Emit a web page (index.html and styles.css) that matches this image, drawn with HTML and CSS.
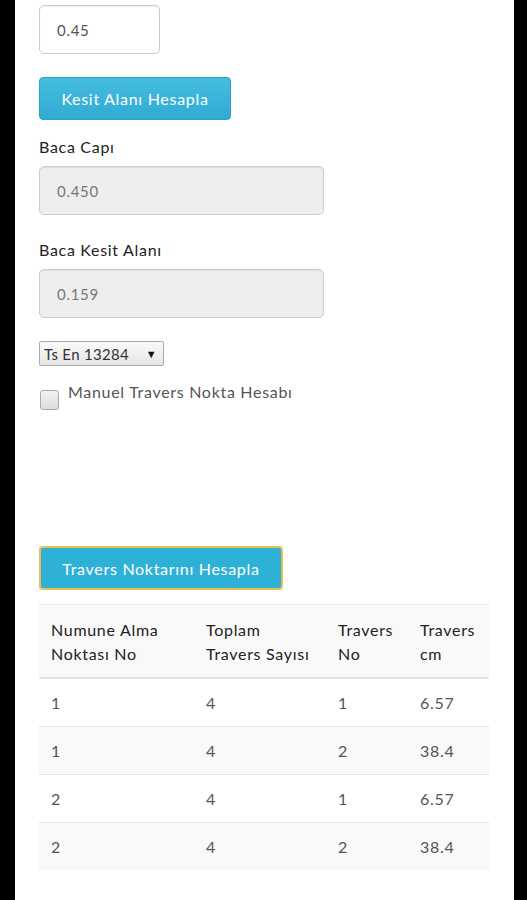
FILE: index.html
```html
<!DOCTYPE html>
<html lang="tr">
<head>
<meta charset="utf-8">
<link rel="stylesheet" href="styles.css">
</head>
<body>
<div class="page">
  <div class="content">
    <input class="field field-small" type="text" value="0.45">
    <button class="btn btn-calc">Kesit Alanı Hesapla</button>

    <label class="lbl lbl-first">Baca Capı</label>
    <input class="field field-wide" type="text" value="0.450" disabled>

    <label class="lbl lbl-next">Baca Kesit Alanı</label>
    <input class="field field-wide" type="text" value="0.159" disabled>

    <div class="select"><span>Ts En 13284</span><span class="arrow">▼</span></div>

    <div class="check-row">
      <span class="box"></span>
      <span class="check-label">Manuel Travers Nokta Hesabı</span>
    </div>

    <button class="btn btn-travers">Travers Noktarını Hesapla</button>

    <table class="tbl">
      <thead>
        <tr><th class="c1">Numune Alma Noktası No</th><th class="c2">Toplam Travers Sayısı</th><th class="c3">Travers No</th><th class="c4">Travers cm</th></tr>
      </thead>
      <tbody>
        <tr><td>1</td><td>4</td><td>1</td><td>6.57</td></tr>
        <tr><td>1</td><td>4</td><td>2</td><td>38.4</td></tr>
        <tr><td>2</td><td>4</td><td>1</td><td>6.57</td></tr>
        <tr><td>2</td><td>4</td><td>2</td><td>38.4</td></tr>
      </tbody>
    </table>
  </div>
</div>
</body>
</html>
```

FILE: styles.css
```css
* { box-sizing: border-box; }
html, body { margin: 0; padding: 0; background: #000; }
body { font-family: "Lato", "Open Sans", sans-serif; letter-spacing: 0.7px; }
.page {
  margin-left: 15px;
  width: 499px;
  min-height: 900px;
  background: #fff;
}
.content {
  padding: 5px 0 0 24px;
  display: flex;
  flex-direction: column;
  align-items: flex-start;
}
.field {
  height: 49px;
  border: 1px solid #ccc;
  border-radius: 5px;
  background: #fff;
  padding: 0 17px;
  font-family: inherit;
  letter-spacing: 0.7px;
  font-size: 15px;
  color: #555;
  box-shadow: inset 0 1px 1px rgba(0,0,0,0.06);
}
.field-small { width: 121px; }
.field-wide { width: 285px; background: #eeeeee; color: #777; margin-top: 9px; }
.btn {
  font-family: inherit;
  letter-spacing: 0.7px;
  font-size: 16px;
  color: #fff;
  border-radius: 4px;
  cursor: pointer;
}
.btn-calc {
  margin-top: 23px;
  width: 192px;
  height: 43px;
  background: linear-gradient(#45bde0, #31abd3);
  border: 1px solid #2ba2c8;
}
.lbl {
  font-size: 16px;
  color: #222;
  line-height: 20px;
}
.lbl-first { margin-top: 17px; }
.lbl-next { margin-top: 25px; }
.select {
  margin-top: 23px;
  width: 125px;
  height: 25px;
  border: 1px solid #aaa;
  border-radius: 2px;
  background: linear-gradient(#fafafa, #e6e6e6);
  font-size: 15px;
  letter-spacing: 0.3px;
  color: #333;
  display: flex;
  align-items: center;
  justify-content: space-between;
  padding: 0 6px 0 4px;
}
.select .arrow { font-size: 11px; color: #111; }
.check-row {
  margin-top: 20px;
  margin-left: 1px;
  display: flex;
  align-items: flex-start;
  gap: 9px;
}
.box {
  margin-top: 4px;
  width: 19px;
  height: 20px;
  border: 1px solid #aaa;
  border-radius: 3px;
  background: linear-gradient(#f2f2f2, #dcdcdc);
}
.check-label {
  font-size: 16px;
  color: #555;
  line-height: 20px;
  margin-top: -4px;
}
.btn-travers {
  margin-top: 136px;
  width: 244px;
  height: 44px;
  background: #2eb1d6;
  border: 2px solid #e7bf55;
}
.tbl {
  margin-top: 14px;
  width: 450px;
  border-collapse: collapse;
  font-size: 16px;
  color: #333;
}
.tbl th {
  text-align: left;
  font-weight: normal;
  color: #222;
  line-height: 24px;
  padding: 13px 12px 11px 12px;
  vertical-align: top;
  background: #f9f9f9;
  border-top: 1px solid #eee;
  border-bottom: 2px solid #e4e4e4;
}
.tbl .c1 { width: 155px; }
.tbl .c2 { width: 132px; }
.tbl .c3 { width: 82px; }
.tbl td {
  height: 48px;
  padding: 0 12px;
  color: #555;
  border-top: 1px solid #e6e6e6;
}
.tbl tbody tr:nth-child(even) td { background: #f9f9f9; }
```
